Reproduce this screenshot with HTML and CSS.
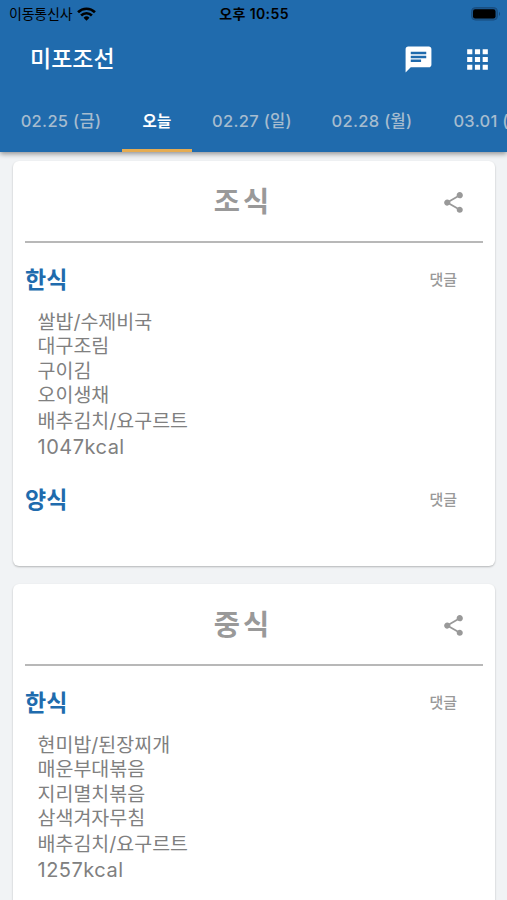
FILE: index.html
```
<!DOCTYPE html>
<html lang="ko">
<head>
    <meta charset="UTF-8">
    <meta name="viewport" content="width=device-width, initial-scale=1.0">
    <title>미포조선</title>
    <link rel="stylesheet" href="styles.css">
</head>
<body>
    <header>
        <div class="status-bar">
            <div class="carrier">
                <span>이동통신사</span>
                <svg class="wifi" viewBox="0 0 18 13" fill="none" stroke="#000" stroke-width="2.5">
                    <path d="M1 4.8a11.4 11.4 0 0 1 16 0"/>
                    <path d="M3.9 7.9a7.3 7.3 0 0 1 10.2 0"/>
                    <path d="M9 13 6.2 10.1a4 4 0 0 1 5.6 0Z" fill="#000" stroke="none"/>
                </svg>
            </div>
            <div class="clock">오후 10:55</div>
            <div class="battery-wrap">
                <svg class="battery" viewBox="0 0 30 14">
                    <rect x=".5" y=".5" width="26" height="12.6" rx="4" fill="#1b568d" stroke="#194f82"/>
                    <rect x="2" y="2.2" width="22.5" height="9.2" rx="2.2" fill="#000"/>
                    <path d="M28 4.8c1.4.8 1.4 3.4 0 4.2z" fill="#174a7a"/>
                </svg>
            </div>
        </div>

        <div class="app-bar">
            <h1>미포조선</h1>
            <div class="actions">
                <svg class="icon" viewBox="0 0 24 24"><path d="M20 2H4c-1.1 0-1.99.9-1.99 2L2 22l4-4h14c1.1 0 2-.9 2-2V4c0-1.1-.9-2-2-2zM6 9h12v2H6V9zm8 5H6v-2h8v2zm4-6H6V6h12v2z"/></svg>
                <svg class="icon" viewBox="0 0 24 24"><path d="M4 8h4V4H4v4zm6 12h4v-4h-4v4zm-6 0h4v-4H4v4zm0-6h4v-4H4v4zm6 0h4v-4h-4v4zm6-10v4h4V4h-4zm-6 4h4V4h-4v4zm6 6h4v-4h-4v4zm0 6h4v-4h-4v4z"/></svg>
            </div>
        </div>

        <nav class="tabs">
            <a class="tab">02.25 (금)</a>
            <a class="tab active">오늘</a>
            <a class="tab">02.27 (일)</a>
            <a class="tab">02.28 (월)</a>
            <a class="tab">03.01 (화)</a>
        </nav>
    </header>

    <main>
        <section class="card">
            <div class="card-header">
                <h2>조식</h2>
                <svg class="share" viewBox="0 0 24 24"><path d="M18 16.08c-.76 0-1.44.3-1.96.77L8.91 12.7c.05-.23.09-.46.09-.7s-.04-.47-.09-.7l7.05-4.11c.54.5 1.25.81 2.04.81 1.66 0 3-1.34 3-3s-1.34-3-3-3-3 1.34-3 3c0 .24.04.47.09.7L8.04 9.81C7.5 9.31 6.79 9 6 9c-1.66 0-3 1.34-3 3s1.34 3 3 3c.79 0 1.5-.31 2.04-.81l7.12 4.16c-.05.21-.08.43-.08.65 0 1.61 1.31 2.92 2.92 2.92s2.92-1.31 2.92-2.92-1.31-2.92-2.92-2.92z"/></svg>
            </div>
            <div class="menu-header">
                <h3>한식</h3>
                <a class="comment">댓글</a>
            </div>
            <ul class="menu">
                <li>쌀밥/수제비국</li>
                <li>대구조림</li>
                <li>구이김</li>
                <li>오이생채</li>
                <li class="tall">배추김치/요구르트</li>
                <li class="tall kcal">1047kcal</li>
            </ul>
            <div class="menu-header">
                <h3>양식</h3>
                <a class="comment">댓글</a>
            </div>
        </section>

        <section class="card">
            <div class="card-header">
                <h2>중식</h2>
                <svg class="share" viewBox="0 0 24 24"><path d="M18 16.08c-.76 0-1.44.3-1.96.77L8.91 12.7c.05-.23.09-.46.09-.7s-.04-.47-.09-.7l7.05-4.11c.54.5 1.25.81 2.04.81 1.66 0 3-1.34 3-3s-1.34-3-3-3-3 1.34-3 3c0 .24.04.47.09.7L8.04 9.81C7.5 9.31 6.79 9 6 9c-1.66 0-3 1.34-3 3s1.34 3 3 3c.79 0 1.5-.31 2.04-.81l7.12 4.16c-.05.21-.08.43-.08.65 0 1.61 1.31 2.92 2.92 2.92s2.92-1.31 2.92-2.92-1.31-2.92-2.92-2.92z"/></svg>
            </div>
            <div class="menu-header">
                <h3>한식</h3>
                <a class="comment">댓글</a>
            </div>
            <ul class="menu">
                <li>현미밥/된장찌개</li>
                <li>매운부대볶음</li>
                <li>지리멸치볶음</li>
                <li>삼색겨자무침</li>
                <li class="tall">배추김치/요구르트</li>
                <li class="tall kcal">1257kcal</li>
            </ul>
        </section>
    </main>
</body>
</html>
```
FILE: styles.css
```
:root{
    --primary:#206bad;
    --accent:#e5ac52;
    --background:#f1f3f5;
    --gray:#999;
}

*{margin:0;padding:0;box-sizing:border-box;}
body{
    height:100vh;
    overflow:hidden;
    display:flex;
    flex-direction:column;
    background:var(--background);
    font-family:Inter,"Noto Sans CJK KR",sans-serif;
}

/* ========= HEADER ========= */
header{
    position:relative;
    z-index:1;
    flex:none;
    height:152px;
    background:var(--primary);
    box-shadow:0 2px 5px rgba(0,0,0,.4);
}
.status-bar{
    display:grid;
    grid-template-columns:1fr auto 1fr;
    align-items:center;
    height:27px;
    padding:0 6px 0 9px;
    font-size:14px;
    line-height:27px;
    color:#000;
}
.carrier{display:flex;align-items:center;gap:5px;letter-spacing:-.2px;}
.wifi{width:19px;height:14px;}
.clock{font-weight:600;letter-spacing:.4px;margin-right:2px;}
.battery-wrap{display:flex;justify-content:flex-end;}
.battery{width:30px;height:14px;}

.app-bar{
    display:flex;
    justify-content:space-between;
    align-items:center;
    height:63px;
    padding:0 14px 0 30px;
}
.app-bar h1{font-size:23px;font-weight:500;line-height:32px;color:#fff;}
.actions{display:flex;gap:28px;padding-top:2px;}
.icon{width:31px;height:31px;fill:#fff;}

/* ========= TABS ========= */
.tabs{display:flex;height:62px;overflow:hidden;}
.tab{
    flex:none;
    width:120px;
    text-align:center;
    font-size:16.5px;
    font-weight:500;
    line-height:62px;
    letter-spacing:.3px;
    white-space:nowrap;
    color:#a6bccf;
}
.tab:first-child{width:122px;}
.tab.active{
    width:70px;
    font-size:15.5px;
    font-weight:700;
    line-height:64px;
    height:62px;
    color:#fff;
    border-bottom:3px solid var(--accent);
}

/* ========= CARDS ========= */
main{padding:9px 12px 0 13px;}
.card{
    height:405px;
    margin-bottom:18px;
    padding:0 12px;
    background:#fff;
    border-radius:6px;
    box-shadow:0 1px 2px rgba(0,0,0,.25);
}
.card-header{
    display:grid;
    grid-template-columns:1fr auto 1fr;
    align-items:center;
    height:82px;
    padding-top:2px;
    border-bottom:2px solid #b8b8b8;
}
.card-header h2{
    grid-column:2;
    margin-right:22px;
    font-size:28.5px;
    font-weight:700;
    line-height:40px;
    letter-spacing:3px;
    color:var(--gray);
}
.share{
    justify-self:end;
    width:25px;
    height:25px;
    margin-right:17px;
    fill:var(--gray);
}
.menu-header{
    display:flex;
    justify-content:space-between;
    align-items:center;
    height:67px;
    padding:7px 26px 0 0;
}
.menu-header h3{font-size:23px;font-weight:700;line-height:32px;color:var(--primary);}
.comment{font-size:15px;font-weight:500;line-height:20px;color:var(--gray);}
.menu{
    list-style:none;
    padding:0 0 3px 12.5px;
    font-size:19.5px;
    color:#808080;
}
.menu li{line-height:24.4px;}
.menu .tall{line-height:26px;}
.menu .kcal{font-size:20px;letter-spacing:.5px;}
```
